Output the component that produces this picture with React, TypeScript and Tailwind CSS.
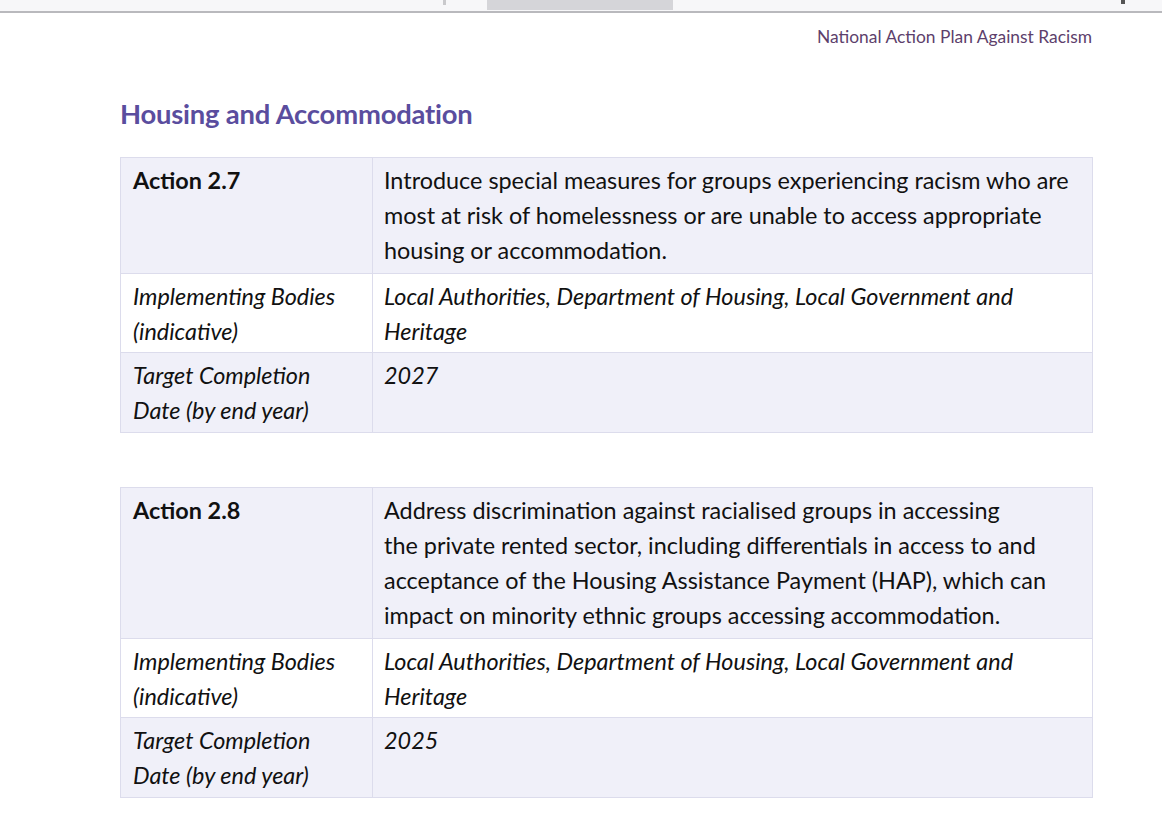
import React from "react";

type Row = { label: React.ReactNode; value: React.ReactNode; bold?: boolean; bg: string; pb: string };

function ActionTable({ rows }: { rows: Row[] }) {
  return (
    <table className="w-[973px] border-collapse text-[23.4px] leading-[35px] text-[#111]">
      <tbody>
        {rows.map((r, i) => (
          <tr key={i} className={r.bg}>
            <td
              className={`w-[252px] border border-[#dcdcec] px-[12px] pt-[5px] align-top ${r.pb} ${
                r.bold ? "font-bold" : "italic"
              }`}
            >
              {r.label}
            </td>
            <td className={`border border-[#dcdcec] pl-[11px] pr-[12px] pt-[5px] align-top ${r.pb} ${r.bold ? "" : "italic"}`}>
              {r.value}
            </td>
          </tr>
        ))}
      </tbody>
    </table>
  );
}

const implementing = (
  <>
    Implementing Bodies
    <br />
    (indicative)
  </>
);
const target = (
  <>
    Target Completion
    <br />
    Date (by end year)
  </>
);

export default function App() {
  return (
    <div className="h-[820px] w-[1162px] overflow-hidden bg-white" style={{ fontFamily: "Lato, 'Open Sans', sans-serif" }}>
      <div className="relative h-[13px] border-b-2 border-[#b9b9bd] bg-[#f7f7f9]">
        <div className="absolute left-[487px] top-0 h-[10px] w-[186px] bg-[#d5d5d9]" />
        <div className="absolute left-[443px] top-0 h-[5px] w-[3px] bg-[#c9c9cc]" />
        <div className="absolute left-[1121px] top-0 h-[4px] w-[4px] bg-[#555]" />
      </div>
      <div className="flex justify-end pr-[70px] pt-[12px] text-[17.4px] leading-[24px] text-[#5d3f6c]">
        National Action Plan Against Racism
      </div>
      <div className="pl-[120px] pt-[48px]">
        <h2 className="text-[27.4px] font-bold leading-[34px] tracking-[-0.2px] text-[#5a4d9e]">Housing and Accommodation</h2>
        <div className="mt-[26px]">
          <ActionTable
            rows={[
              {
                label: "Action 2.7",
                value:
                  "Introduce special measures for groups experiencing racism who are most at risk of homelessness or are unable to access appropriate housing or accommodation.",
                bold: true,
                bg: "bg-[#f0f0f9]",
                pb: "pb-[5px]",
              },
              {
                label: implementing,
                value: "Local Authorities, Department of Housing, Local Government and Heritage",
                bg: "bg-white",
                pb: "pb-[3px]",
              },
              { label: target, value: "2027", bg: "bg-[#f0f0f9]", pb: "pb-[4px]" },
            ]}
          />
        </div>
        <div className="mt-[54px]">
          <ActionTable
            rows={[
              {
                label: "Action 2.8",
                value: (
                  <>
                    Address discrimination against racialised groups in accessing
                    <br />
                    the private rented sector, including differentials in access to and acceptance of the Housing
                    Assistance Payment (HAP), which can impact on minority ethnic groups accessing accommodation.
                  </>
                ),
                bold: true,
                bg: "bg-[#f0f0f9]",
                pb: "pb-[5px]",
              },
              {
                label: implementing,
                value: "Local Authorities, Department of Housing, Local Government and Heritage",
                bg: "bg-white",
                pb: "pb-[3px]",
              },
              { label: target, value: "2025", bg: "bg-[#f0f0f9]", pb: "pb-[4px]" },
            ]}
          />
        </div>
      </div>
    </div>
  );
}
